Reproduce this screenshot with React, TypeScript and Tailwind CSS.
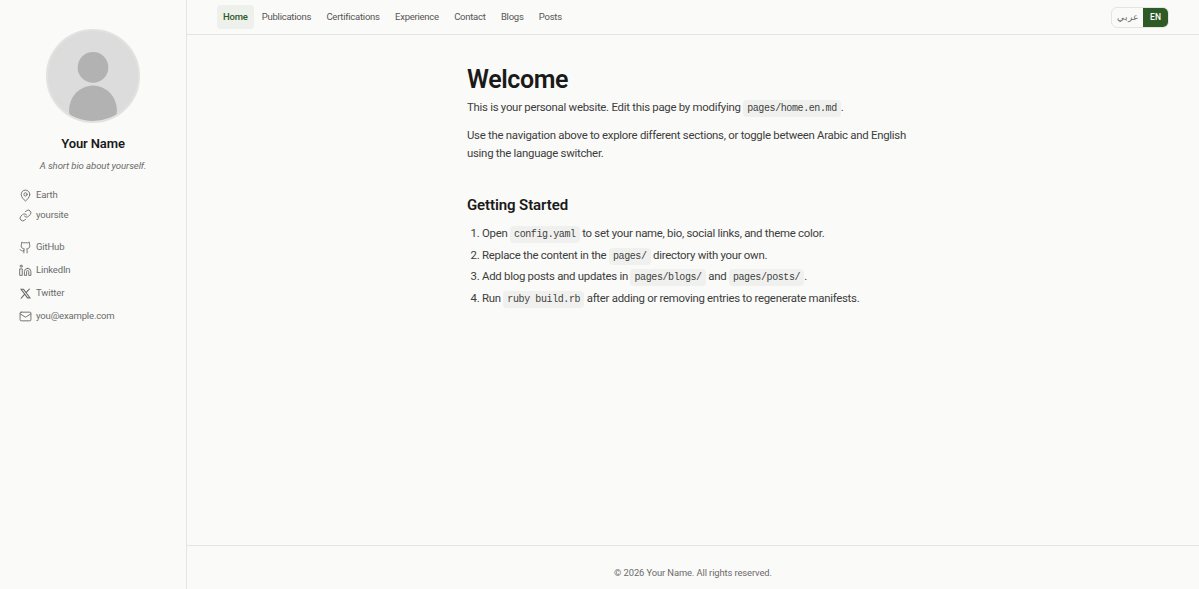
import { Link, Mail, MapPin, Github, Linkedin } from "lucide-react"
import { RiTwitterXLine } from "react-icons/ri"

const navItems = ["Publications", "Certifications", "Experience", "Contact", "Blogs", "Posts"]

function Code({ children }: { children: string }) {
  return (
    <code className="rounded-[4px] bg-[#f0f1ee] px-[4px] py-[3px] font-['Liberation_Mono',monospace] text-[10px] leading-none tracking-[-0.4px] text-[#3f3f3f]">
      {children}
    </code>
  )
}

function Avatar() {
  return (
    <svg viewBox="0 0 94 94" className="h-[94px] w-[94px] rounded-full border-2 border-[#e2e2e0] bg-[#dcdcdc]">
      <circle cx="47" cy="38" r="16" fill="#b2b2b2" />
      <ellipse cx="47" cy="83" rx="25" ry="26" fill="#b2b2b2" />
    </svg>
  )
}

export default function App() {
  return (
    <div className="flex h-[589px] overflow-hidden bg-[#fafaf8] font-['Roboto',sans-serif] text-[#1a1a1a]">
      {/* Sidebar */}
      <aside className="w-[187px] shrink-0 border-r border-[#e4e4e1] pt-[29px]">
        <div className="flex flex-col items-center">
          <Avatar />
          <h2 className="mt-[11px] text-[13px] leading-[20px] font-semibold tracking-[-0.1px]">Your Name</h2>
          <p className="mt-[4px] text-[9.6px] leading-[16px] tracking-[-0.1px] text-[#6b6b6b] italic">A short bio about yourself.</p>
        </div>
        <div className="mt-[11px] flex flex-col px-[19px] text-[9.5px] tracking-[-0.15px] text-[#6b6b6b]">
          <div className="flex h-[20px] items-center gap-[4px]">
            <MapPin size={13} strokeWidth={1.7} />
            Earth
          </div>
          <div className="flex h-[20px] items-center gap-[4px]">
            <Link size={13} strokeWidth={1.7} />
            yoursite
          </div>
          <div className="mt-[12px] flex flex-col gap-[3px]">
            <div className="flex h-[20px] items-center gap-[4px]">
              <Github size={13} strokeWidth={1.7} />
              GitHub
            </div>
            <div className="flex h-[20px] items-center gap-[4px]">
              <Linkedin size={13} strokeWidth={1.7} />
              LinkedIn
            </div>
            <div className="flex h-[20px] items-center gap-[4px]">
              <RiTwitterXLine size={13} />
              Twitter
            </div>
            <div className="flex h-[20px] items-center gap-[4px]">
              <Mail size={13} strokeWidth={1.7} />
              you@example.com
            </div>
          </div>
        </div>
      </aside>

      <div className="flex min-w-0 flex-1 flex-col">
        {/* Top nav */}
        <header className="flex h-[35px] shrink-0 items-center justify-between border-b border-[#e4e4e1] px-[30px]">
          <nav className="flex items-center gap-[1.3px] text-[9.5px] tracking-[-0.25px] text-[#555]">
            <a className="rounded-[4px] bg-[#eef0eb] px-[6px] py-[5px] font-medium text-[#2d5a27]">Home</a>
            {navItems.map(item => (
              <a key={item} className="px-[7px] py-[5px]">{item}</a>
            ))}
          </nav>
          <div className="flex h-[21px] overflow-hidden rounded-[6px] border border-[#e4e4e1] text-[8.5px]">
            <span className="flex w-[31px] items-center justify-center text-[#666]">عربي</span>
            <span className="flex w-[25px] items-center justify-center bg-[#2d5a27] font-medium text-white">EN</span>
          </div>
        </header>

        {/* Content */}
        <main className="flex-1">
          <div className="mx-auto w-[452px] pt-[26px] text-[11.4px] tracking-[-0.27px] text-[#3d3d3d]">
            <h1 className="text-[25px] leading-[37px] font-semibold tracking-[-0.4px] text-[#1a1a1a]">Welcome</h1>
            <p className="leading-[18px]">
              This is your personal website. Edit this page by modifying <Code>pages/home.en.md</Code>.
            </p>
            <p className="mt-[10px] leading-[18px]">
              Use the navigation above to explore different sections, or toggle between Arabic and English using the language switcher.
            </p>
            <h2 className="mt-[31px] text-[15px] leading-[24px] font-semibold tracking-[-0.1px] text-[#1a1a1a]">Getting Started</h2>
            <ol className="mt-[7px] flex list-decimal flex-col gap-[3.6px] pl-[15px] leading-[18px]">
              <li>Open <Code>config.yaml</Code> to set your name, bio, social links, and theme color.</li>
              <li>Replace the content in the <Code>pages/</Code> directory with your own.</li>
              <li>Add blog posts and updates in <Code>pages/blogs/</Code> and <Code>pages/posts/</Code>.</li>
              <li>Run <Code>ruby build.rb</Code> after adding or removing entries to regenerate manifests.</li>
            </ol>
          </div>
        </main>

        {/* Footer */}
        <footer className="flex h-[44px] shrink-0 items-center justify-center border-t border-[#e4e4e1] pt-[11px] text-[9.4px] tracking-[-0.1px] text-[#6b6b6b]">
          © 2026 Your Name. All rights reserved.
        </footer>
      </div>
    </div>
  )
}
